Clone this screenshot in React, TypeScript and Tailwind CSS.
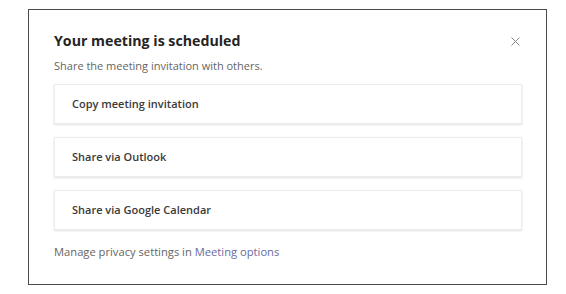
export default function App() {
  const actions = ["Copy meeting invitation", "Share via Outlook", "Share via Google Calendar"];

  return (
    <div className="min-h-screen bg-white pt-[9px] pl-[28px] font-['Open_Sans','Noto_Sans',sans-serif]">
      <div className="w-[519px] h-[276px] border border-[#4a4a4a] bg-white pl-[25px] pr-[24px] pt-[21px]">
        <div className="flex items-center justify-between h-[20px]">
          <h1 className="text-[14.2px] leading-[20px] font-bold text-[#252423]">
            Your meeting is scheduled
          </h1>
          <button className="mr-[2px] text-[#8a8886]" aria-label="Close">
            <svg width="9" height="9" viewBox="0 0 9 9" fill="none" stroke="currentColor" strokeWidth="1">
              <path d="M0.5 0.5 L8.5 8.5 M8.5 0.5 L0.5 8.5" />
            </svg>
          </button>
        </div>
        <p className="mt-[7px] text-[11px] leading-[16px] text-[#666564]">
          Share the meeting invitation with others.
        </p>
        <div className="mt-[10px] flex flex-col gap-[13px]">
          {actions.map((a) => (
            <button
              key={a}
              className="h-[40px] w-full text-left pl-[17px] bg-white border border-[#ececec] shadow-[0_1px_2px_rgba(0,0,0,0.12)] text-[11px] font-semibold text-[#3b3a39]"
            >
              {a}
            </button>
          ))}
        </div>
        <p className="mt-[14px] text-[11.2px] leading-[16px] text-[#666564]">
          Manage privacy settings in <span className="text-[#6a6c9e]">Meeting options</span>
        </p>
      </div>
    </div>
  );
}
